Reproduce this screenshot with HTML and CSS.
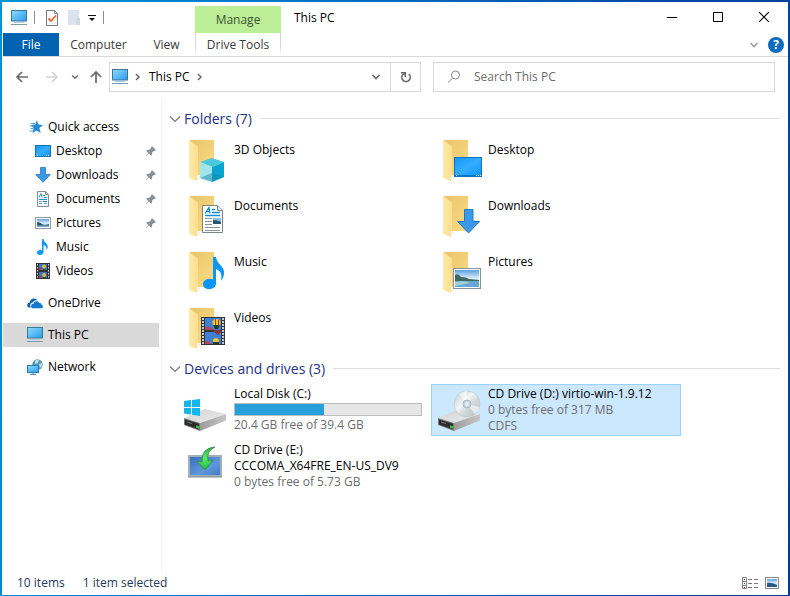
FILE: index.html
```html
<!DOCTYPE html>
<html lang="en">
<head>
<meta charset="utf-8">
<title>This PC</title>
<link rel="stylesheet" href="styles.css">
</head>
<body>
<svg class="sprite" aria-hidden="true">
  <defs>
    <linearGradient id="screen" x1="0" y1="0" x2="1" y2="1"><stop offset="0" stop-color="#8fdcff"/><stop offset="1" stop-color="#2a9bea"/></linearGradient>
    <linearGradient id="blue" x1="0" y1="0" x2="1" y2="1"><stop offset="0" stop-color="#1597f5"/><stop offset=".5" stop-color="#35adff"/><stop offset="1" stop-color="#0a93f8"/></linearGradient>
    <linearGradient id="leaf" x1="0" y1="0" x2="1" y2="0"><stop offset="0" stop-color="#ffe9a9"/><stop offset="1" stop-color="#fbdf90"/></linearGradient>
    <linearGradient id="back" x1="0" y1="0" x2="1" y2="1"><stop offset="0" stop-color="#e9c468"/><stop offset="1" stop-color="#fbdc86"/></linearGradient>
    <linearGradient id="sky" x1="0" y1="0" x2="0" y2="1"><stop offset="0" stop-color="#5ba0e0"/><stop offset=".5" stop-color="#dceefa"/><stop offset="1" stop-color="#6fa6c8"/></linearGradient>
    <linearGradient id="metal" x1="0" y1="0" x2="1" y2="1"><stop offset="0" stop-color="#d2d2d2"/><stop offset="1" stop-color="#ececec"/></linearGradient>
    <linearGradient id="side" x1="0" y1="0" x2="1" y2="0"><stop offset="0" stop-color="#9c9c9c"/><stop offset="1" stop-color="#c6c6c6"/></linearGradient>
    <linearGradient id="disc" x1="0" y1="0" x2="1" y2="1"><stop offset="0" stop-color="#bfc8ce"/><stop offset=".4" stop-color="#f1f4f5"/><stop offset=".6" stop-color="#d3dadd"/><stop offset="1" stop-color="#b6bfc4"/></linearGradient>
    <linearGradient id="green" x1="0" y1="0" x2="0" y2="1"><stop offset="0" stop-color="#3fae4c"/><stop offset=".5" stop-color="#5be86a"/><stop offset="1" stop-color="#1fb937"/></linearGradient>
    <linearGradient id="setup" x1="0" y1="0" x2="1" y2="1"><stop offset="0" stop-color="#3a6cb8"/><stop offset=".6" stop-color="#5f98dc"/><stop offset="1" stop-color="#3f74c2"/></linearGradient>
  </defs>

  <symbol id="pc" viewBox="0 0 16 16">
    <rect x=".5" y=".5" width="15" height="10.5" fill="url(#screen)" stroke="#40759a"/>
    <path d="M3 12.500h10" stroke="#a9cfe2"/><path d="M0 14.500h16" stroke="#7f9aaa"/>
  </symbol>
  <symbol id="star" viewBox="0 0 16 16">
    <path d="M10 1l1.300 4.500L16 6l-3.700 3 1.400 5-4.200-2.600L5.500 14l1.200-4.800L4 6l4.200-.4z" fill="#2388d8"/>
    <path d="M4 4.500h4M2.500 7h4M3.500 9.500h3M2.500 12h4" stroke="#4aa5e8"/>
  </symbol>
  <symbol id="desktop" viewBox="0 0 16 16">
    <rect x=".5" y="2.500" width="15" height="11" fill="url(#blue)" stroke="#1473b8"/>
    <path d="M2 12.500h1M11 12.500h1M13 12.500h1" stroke="#fff"/>
  </symbol>
  <symbol id="down" viewBox="0 0 16 16">
    <path d="M5.500 .5h5v7h4.800L8 15.300.7 7.500h4.800z" fill="#3d98e6" stroke="#2778bf" stroke-width=".8"/>
  </symbol>
  <symbol id="doc" viewBox="0 0 16 16">
    <path d="M2.500.5h8l3 3v12h-11z" fill="#fff" stroke="#858b90"/><path d="M10.500.5v3h3" fill="none" stroke="#858b90"/>
    <path d="M4 6.500l2-4 1 4M8 4.500h2M4 8.500h8M9 6.500h3" fill="none" stroke="#2294dc"/>
    <path d="M4 10.500h3M4 12.500h3M9 12.500h3" stroke="#5fa3cc"/><path d="M8 10.500h4" stroke="#2a70b0"/>
  </symbol>
  <symbol id="picture" viewBox="0 0 16 16">
    <rect x=".5" y="2.500" width="15" height="11" fill="#fff" stroke="#8c99a6"/>
    <rect x="2" y="4" width="12" height="8" fill="url(#sky)"/>
    <path d="M2 7q3 0 5 2t7 0v2H2z" fill="#2c5a6c"/><path d="M2 10.500h12V12H2z" fill="#77acd0"/>
  </symbol>
  <symbol id="music" viewBox="0 0 16 16">
    <path d="M7 0h1.500c.3 3.500 4.800 4.500 4.200 8.500-.2 1.200-.7 2-1.400 2.700.8-2.800-.5-4.300-2.800-5.200v7C8.500 15 6.800 16 5 16s-3-1-3-2.500S3.300 11 5 11c.8 0 1.500.1 2 .4z" fill="#0c98f5"/>
  </symbol>
  <symbol id="video" viewBox="0 0 16 16">
    <rect x="1" y="0" width="14" height="16" fill="#343434"/>
    <path d="M2.500 1v14M13.500 1v14" stroke="#ddd" stroke-dasharray="1.500 1.500"/>
    <path d="M4 1h8v6H4zM4 9h8v6H4z" fill="#3b72c7"/>
    <circle cx="9" cy="3.500" r="2" fill="#d9b93a"/><circle cx="9" cy="12" r="2" fill="#d9b93a"/>
    <path d="M4 5h3v2H4zM4 13h3v2H4z" fill="#8a4a62"/><path d="M8 6h3v1H8zM8 14h3v1H8z" fill="#295b36"/>
  </symbol>
  <symbol id="cloud" viewBox="0 0 16 16">
    <path d="M1.500 12.500C-.8 10.800.2 7.800 2.600 7.600 3 4 7.700 2 10.300 5.300 7.500 5 6.300 6 5.700 7.600 3.700 7.700 2.500 10 3.800 12.500z" fill="#0c62b4"/>
    <path d="M6 13.300c-2.600 0-2.700-4.300.4-4.500.5-3.300 5-3.400 5.900-.8 2-.3 2.600 1.400 2.300 2.100 2 .4 1.700 3.200-.4 3.200z" fill="#1378cf"/>
  </symbol>
  <symbol id="network" viewBox="0 0 16 16">
    <circle cx="10.500" cy="5.500" r="5.200" fill="#5695ad"/><path d="M8 2q2-2 4-1l-1 3-3 1zM12 5l3-1v3l-2 2z" fill="#b8dfe2"/>
    <rect x=".5" y="6.500" width="11" height="7" fill="url(#screen)" stroke="#287cb5"/><path d="M3 15.500h6M6 14v1" stroke="#5187a4"/>
  </symbol>
  <symbol id="pin" viewBox="0 0 12 12">
    <path d="M7 1l4 4-1 .9-.9-.2-2 2L7 9.800l-.9.9-2.200-2.200L1 11.200.7 11l2.600-3L1.200 5.800l1-.9 2.100-.1 2-2L6.100 2z" fill="#8b9196"/>
  </symbol>
  <symbol id="chevron" viewBox="0 0 10 10">
    <path d="M1.500 3L5 6.500 8.500 3" fill="none" stroke="currentColor" stroke-width="1.700"/>
  </symbol>
  <symbol id="crumb" viewBox="0 0 6 10">
    <path d="M1 2l3 3-3 3" fill="none" stroke="#6b6b6b" stroke-width="1.500"/>
  </symbol>
  <symbol id="arrow" viewBox="0 0 14 14">
    <path d="M13 7H2M7 2L2 7l5 5" fill="none" stroke="currentColor" stroke-width="1.700"/>
  </symbol>

  <symbol id="folder" viewBox="0 0 48 48">
    <path d="M6 4h25v35H13z" fill="url(#back)"/><path d="M6 4l7 5q2 1.500 2 4v26l-1 1v5L6 42z" fill="url(#leaf)"/>
    <path d="M14 39h3v3l-3 2z" fill="#f3f3f1"/>
  </symbol>
  <symbol id="drive" viewBox="0 0 48 48">
    <path d="M1 32L22 23l21 5-26 9z" fill="url(#metal)"/><path d="M17 37l26-9v6.500L17 45z" fill="url(#side)"/>
    <path d="M1 32l16 5v8L1 39z" fill="#777"/><path d="M2 33.500l14 4.300v5.800L2 38.500z" fill="#292b2a"/>
    <path d="M4 36l5 1.600" stroke="#777"/><path d="M13 39.300l3 1v2.400l-3-1z" fill="#33c834"/>
  </symbol>
</svg>

<div class="window">
  <header class="ribbon">
    <div class="quick-bar">
      <svg class="i16"><use href="#pc"/></svg>
      <span class="bar"></span>
      <button class="tool check" aria-label="Properties"><svg class="i16" viewBox="0 0 16 16"><path d="M2.500.5h8l3 3v12h-11z" fill="#fafafa" stroke="#777"/><path d="M10.500.5v3h3" fill="none" stroke="#888"/><path d="M4.500 8.500L7 11l5-5.500" fill="none" stroke="#e8642b" stroke-width="1.800"/></svg></button>
      <button class="tool" aria-label="New folder"><svg class="i16" viewBox="0 0 16 16"><path d="M2 0h11v8l1 1v6H2z" fill="#dce3ef"/><path d="M11 15V9l2-1v7" fill="none" stroke="#c6cfdf"/></svg></button>
      <button class="tool more" aria-label="Customize toolbar"><svg class="i8" viewBox="0 0 8 8"><path d="M0 1.500h8" stroke="#111"/><path d="M1 4h6L4 7z" fill="#111"/></svg></button>
      <span class="bar"></span>
    </div>
    <div class="context">Manage</div>
    <h1 class="title">This PC</h1>
    <div class="controls">
      <button aria-label="Minimize"><svg viewBox="0 0 10 10"><path d="M0 5.500h10" stroke="#000"/></svg></button>
      <button aria-label="Maximize"><svg viewBox="0 0 10 10"><path d="M.5.5h9v9h-9z" fill="none" stroke="#000"/></svg></button>
      <button aria-label="Close"><svg viewBox="0 0 10 10"><path d="M0 0l10 10M10 0L0 10" stroke="#000" stroke-width="1.200"/></svg></button>
    </div>
    <button class="tab file">File</button>
    <button class="tab">Computer</button>
    <button class="tab">View</button>
    <button class="tab drive-tab">Drive Tools</button>
    <div class="help-area">
      <button class="expand" aria-label="Expand ribbon"><svg class="i10"><use href="#chevron"/></svg></button>
      <button class="help" aria-label="Help">?</button>
    </div>
  </header>

  <div class="navigation">
    <div class="arrows">
      <button aria-label="Back"><svg class="i14"><use href="#arrow"/></svg></button>
      <button class="disabled forward" aria-label="Forward"><svg class="i14"><use href="#arrow"/></svg></button>
      <button class="recent" aria-label="Recent locations"><svg class="i8"><use href="#chevron"/></svg></button>
      <button class="up" aria-label="Up"><svg class="i14"><use href="#arrow"/></svg></button>
    </div>
    <div class="fields">
      <div class="address">
        <svg class="i16"><use href="#pc"/></svg>
        <svg class="crumb"><use href="#crumb"/></svg>
        <a href="#pc-root">This PC</a>
        <svg class="crumb"><use href="#crumb"/></svg>
        <button class="history" aria-label="Previous locations"><svg class="i10"><use href="#chevron"/></svg></button>
        <button class="refresh" aria-label="Refresh"><svg class="i12" viewBox="0 0 12 12"><path d="M8.800 3.200A4.200 4.200 0 1 1 2.400 4.200L5 2" fill="none" stroke="#666" stroke-width="1.600"/><path d="M1 1.700H5.300V6" fill="none" stroke="#666" stroke-width="1.500"/></svg></button>
      </div>
      <label class="search">
        <svg class="i14" viewBox="0 0 14 14"><circle cx="8.500" cy="5" r="4" fill="none" stroke="#858585"/><path d="M5.700 8L1 12.500" stroke="#858585"/></svg>
        <input type="search" placeholder="Search This PC" aria-label="Search This PC">
      </label>
    </div>
  </div>

  <div class="main">
    <nav class="sidebar">
      <a class="item" href="#quick"><svg class="i16"><use href="#star"/></svg>Quick access</a>
      <a class="item sub" href="#desktop-folder"><svg class="i16"><use href="#desktop"/></svg>Desktop<svg class="pin"><use href="#pin"/></svg></a>
      <a class="item sub" href="#downloads"><svg class="i16"><use href="#down"/></svg>Downloads<svg class="pin"><use href="#pin"/></svg></a>
      <a class="item sub" href="#documents"><svg class="i16"><use href="#doc"/></svg>Documents<svg class="pin"><use href="#pin"/></svg></a>
      <a class="item sub" href="#pictures"><svg class="i16"><use href="#picture"/></svg>Pictures<svg class="pin"><use href="#pin"/></svg></a>
      <a class="item sub" href="#music-folder"><svg class="i16"><use href="#music"/></svg>Music</a>
      <a class="item sub" href="#videos"><svg class="i16"><use href="#video"/></svg>Videos</a>
      <a class="item root" href="#onedrive"><svg class="i16"><use href="#cloud"/></svg>OneDrive</a>
      <a class="item root current" href="#pc-root"><svg class="i16"><use href="#pc"/></svg>This PC</a>
      <a class="item root" href="#net"><svg class="i16"><use href="#network"/></svg>Network</a>
    </nav>

    <main class="content">
      <section>
        <h2 class="group"><svg class="fold" viewBox="0 0 12 12"><path d="M1 3.500l5 5 5-5" fill="none" stroke="#777" stroke-width="1.200"/></svg>Folders (7)</h2>
        <div class="tiles folders">
          <a class="tile" href="#objects"><svg class="i48" viewBox="0 0 48 48"><use href="#folder"/><path d="M29 22l12 4-12 5-12-5z" fill="#4cc8de"/><path d="M17 26l12 5v15l-12-4z" fill="#a1e5ed"/><path d="M29 31l12-5v15l-12 5z" fill="#0ba3cf"/><path d="M17 42l12-5 12 4-12 5z" fill="#168eaa" opacity=".5"/></svg><span>3D Objects</span></a>
          <a class="tile" href="#desktop-folder"><svg class="i48" viewBox="0 0 48 48"><use href="#folder"/><rect x="17.500" y="21.500" width="27" height="19" fill="url(#blue)" stroke="#1274bd"/><path d="M18 39.500h26" stroke="#0875c7"/><path d="M19 39.500h1M39 39.500h1M41 39.500h1M43 39.500h1" stroke="#fff"/></svg><span>Desktop</span></a>
          <a class="tile" href="#documents"><svg class="i48" viewBox="0 0 48 48"><use href="#folder"/><path d="M19.500 13.500h15l5 5v22h-20z" fill="#fff" stroke="#7d8387"/><path d="M34.500 13.500v5h5" fill="#e8edf0" stroke="#7d8387"/><path d="M22 21.500l4-6 1 6M23.500 19.500h3M29 17.500h3M29 20.500h8M22 23.500h15" fill="none" stroke="#168bd2" stroke-width="1.300"/><path d="M22 26.500h7M22 29.500h7M22 32.500h7M22 35.500h15M22 38.500h15" stroke="#8e9599"/><path d="M30 26h8v6h-8z" fill="#8fbbe2"/><path d="M30 28q4 0 8 2v2h-8z" fill="#245574"/></svg><span>Documents</span></a>
          <a class="tile" href="#downloads"><svg class="i48" viewBox="0 0 48 48"><use href="#folder"/><path d="M27.500 17.500h8.500v12h6.500L31.500 41 20.500 29.500h7z" fill="#3c99e8" stroke="#2379c0"/></svg><span>Downloads</span></a>
          <a class="tile" href="#music-folder"><svg class="i48" viewBox="0 0 48 48"><use href="#folder"/><path d="M30 9h3c1 8 9 9 8 17-.3 3-1.500 5-3 7 1.500-7-.5-10-5-12v14c0 4-3 6-7 6s-6-2-6-5 3-5 6-5c2 0 3 0 4 .5z" fill="#0996f4"/></svg><span>Music</span></a>
          <a class="tile" href="#pictures"><svg class="i48" viewBox="0 0 48 48"><use href="#folder"/><rect x="16.500" y="20.500" width="27" height="20" fill="#fff" stroke="#87929c"/><rect x="18" y="22" width="24" height="17" fill="url(#sky)"/><path d="M18 27q3-2 6 2 5 0 8 2l10 1v1H18z" fill="#3d6a5c"/><path d="M18 33h24v6H18z" fill="#6aa8d2"/><path d="M18 34q10-2 15 1l-15 3z" fill="#a5cdd6"/></svg><span>Pictures</span></a>
          <a class="tile" href="#videos"><svg class="i48" viewBox="0 0 48 48"><use href="#folder"/><path d="M18 13h24v28H18z" fill="#343434"/><path d="M20 14v27M40 14v27" stroke="#ccc" stroke-width="2" stroke-dasharray="2 1"/><path d="M22 14h16v12H22zM22 28h16v12H22z" fill="#3f7fd6"/><path d="M22 23q4-1 7 1l3 2H22zM22 37q4-1 7 3h-7z" fill="#b04a60"/><circle cx="33.500" cy="19" r="4" fill="#e9c52e"/><path d="M32 15h1v8h-1zM35 16h1v6h-1z" fill="#a2402e"/><path d="M30 21h7l-2 4h-3z" fill="#293b25"/><path d="M31 26h7v2l-3 3-4-3z" fill="#8a3340"/><circle cx="33" cy="37" r="3" fill="#e9c52e"/><path d="M30 38h6v2h-6z" fill="#293b25"/></svg><span>Videos</span></a>
        </div>
      </section>
      <section>
        <h2 class="group"><svg class="fold" viewBox="0 0 12 12"><path d="M1 3.500l5 5 5-5" fill="none" stroke="#777" stroke-width="1.200"/></svg>Devices and drives (3)</h2>
        <div class="tiles">
          <a class="tile" href="#c"><svg class="i48" viewBox="0 0 48 48"><use href="#drive"/><path d="M1 15l7-1v7H1zM9 14l8-1v8H9zM1 22h7v6.500l-7-1zM9 22h8v8l-8-1.300z" fill="#13b5ec"/></svg><span class="info"><span>Local Disk (C:)</span><progress max="100" value="48" aria-label="Space used"></progress><small>20.4 GB free of 39.4 GB</small></span></a>
          <a class="tile selected" href="#d"><svg class="i48" viewBox="0 0 48 48"><use href="#drive"/><circle cx="30" cy="18" r="13" fill="url(#disc)" stroke="#bcc5ca" stroke-width=".6"/><path d="M30 18L22 8q4-3 8-3zM30 18l8 10q4-3 5-7z" fill="#fff" opacity=".55"/><circle cx="30" cy="18" r="4" fill="#c9d5dc" stroke="#aeb9c0"/><circle cx="30" cy="18" r="2" fill="#e4f1fb"/></svg><span class="info"><span>CD Drive (D:) virtio-win-1.9.12</span><small>0 bytes free of 317 MB</small><small>CDFS</small></span></a>
          <a class="tile" href="#e"><svg class="i48" viewBox="0 0 48 48"><rect x="6" y="14" width="32" height="20" fill="url(#setup)" stroke="#a3afb8" stroke-width="2"/><path d="M5 35h34" stroke="#7f8b96"/><path d="M32 5q-9 4-7 14l5-1-8 10-8-9 5 1Q18 6 32 5z" fill="url(#green)" stroke="#23913a" stroke-width=".8"/></svg><span class="info"><span>CD Drive (E:)</span><span>CCCOMA_X64FRE_EN-US_DV9</span><small>0 bytes free of 5.73 GB</small></span></a>
        </div>
      </section>
    </main>
  </div>

  <footer class="status">
    <span>10 items</span>
    <span>1 item selected</span>
    <div class="views">
      <button aria-label="Details view"><svg class="i16" viewBox="0 0 16 16"><path d="M.5 2.500h4v11h-4zM.5 6.500h4M.5 10.500h4" fill="none" stroke="#858585"/><path d="M2 4.500h1M2 8.500h1" stroke="#446"/><path d="M2 12.500h1" stroke="#d22"/><path d="M6 4.500h4M12 4.500h4M6 8.500h4M12 8.500h4M6 12.500h4M12 12.500h4" stroke="#777"/></svg></button>
      <button aria-label="Large icons view"><svg class="i16" viewBox="0 0 16 16"><path d="M1.500 2.500h13v11h-13z" fill="#fff" stroke="#858585"/><path d="M3 4h10v8H3z" fill="url(#sky)"/><path d="M3 8q4-1 10 2v2H3z" fill="#245b87"/></svg></button>
    </div>
  </footer>
</div>
</body>
</html>
```
FILE: styles.css
```css
* { box-sizing: border-box; }
body {
  margin: 0;
  min-height: 100vh;
  display: flex;
  padding: 2px 2px 1px;
  background: linear-gradient(100deg, #0094d8 0%, #0078cc 30%, #0048a8 75%, #003f94 100%);
  font: 12px/16px "Open Sans", "Noto Sans", sans-serif;
  color: #000;
}
button {
  border: 0;
  padding: 0;
  background: none;
  font: inherit;
  color: inherit;
  display: flex;
  align-items: center;
  justify-content: center;
}
a { color: inherit; text-decoration: none; }
svg { display: block; flex: none; }
.sprite { position: absolute; width: 0; height: 0; }
.i8 { width: 8px; height: 8px; }
.i10 { width: 10px; height: 10px; }
.i12 { width: 12px; height: 12px; }
.i14 { width: 14px; height: 14px; }
.i16 { width: 16px; height: 16px; }
.i48 { width: 48px; height: 48px; }

.window {
  flex: 1;
  display: flex;
  flex-direction: column;
  background: #fff;
  padding-left: 1px;
}

/* Title bar and ribbon tabs share one set of columns */
.ribbon {
  display: grid;
  grid-template-columns: 56px 79px 57px 86px 1fr auto;
  grid-template-rows: 31px 23px;
  border-bottom: 1px solid #d9d9d9;
}
.quick-bar { grid-column: 1 / 4; display: flex; align-items: center; padding-left: 8px; }
.bar { width: 1px; height: 13px; background: #8c8c8c; margin-left: 7px; }
.tool { margin-left: 6px; }
.tool.check { margin-left: 9px; }
.context {
  margin-top: 4px;
  background: #bcee98;
  color: #3d5433;
  display: flex;
  align-items: center;
  justify-content: center;
}
.title { margin: 0; padding: 8px 0 0 13px; font-size: 12px; line-height: 16px; font-weight: 400; }
.controls { display: flex; padding-right: 1px; }
.controls button { width: 46px; height: 30px; }
.controls svg { width: 10px; height: 10px; }
.tab { color: #3a3a3a; }
.file { background: #0063b1; color: #fff; }
.drive-tab {
  border: solid;
  border-width: 0 1px;
  border-image: linear-gradient(#d0d0d0, #d8d8d8 60%, #fff 90%) 1;
}
.help-area { grid-column: 5 / 7; display: flex; justify-content: flex-end; align-items: center; gap: 9px; padding-right: 4px; }
.expand { color: #a0a0a0; }
.help { width: 16px; height: 16px; border-radius: 50%; background: #0d6cbd; color: #fff; font-weight: 700; }

.navigation { display: flex; padding: 5px 13px 0 12px; }
.arrows { display: flex; align-items: center; width: 94px; color: #696969; }
.forward { margin-left: 16px; transform: scaleX(-1); }
.disabled { color: #d4d4d4; }
.recent { margin-left: 12px; }
.up { margin-left: 10px; transform: rotate(90deg); }
.fields { flex: 1; display: grid; grid-template-columns: 312fr 342fr; gap: 12px; }
.address { display: flex; align-items: center; height: 30px; border: 1px solid #d9d9d9; padding-left: 2px; }
.crumb { width: 6px; height: 10px; margin: 0 8px 0 7px; }
.history { margin-left: auto; width: 28px; height: 28px; color: #6b6b6b; }
.refresh { width: 30px; height: 28px; border-left: 1px solid #d9d9d9; }
.search { display: flex; align-items: center; height: 30px; border: 1px solid #d9d9d9; padding-left: 13px; gap: 13px; }
.search input { flex: 1; min-width: 0; border: 0; padding: 0; outline: 0; font: inherit; background: none; appearance: none; }
.search input::placeholder { color: #6d6d6d; opacity: 1; }

.main { flex: 1; display: flex; margin-top: 8px; }
.sidebar { width: 159px; padding: 15px 2px 0 0; border-right: 1px solid #f0f0f0; }
.item { display: flex; align-items: center; gap: 5px; height: 24px; padding: 0 2px 0 24px; }
.sub { padding-left: 32px; }
.root { margin-top: 8px; }
.current { background: #d9d9d9; }
.pin { width: 12px; height: 12px; margin-left: auto; }

.content { flex: 1; padding: 7px 8px 0 7px; }
.group {
  display: flex;
  align-items: center;
  height: 23px;
  margin: 0 0 4px;
  font-size: 14px;
  font-weight: 400;
  color: #1e3287;
}
.group::after { content: ""; flex: 1; height: 1px; margin-left: 8px; background: #dedede; }
.fold { width: 12px; height: 12px; margin-right: 3px; }
.tiles { display: grid; grid-template-columns: repeat(auto-fill, 250px); gap: 4px; padding-left: 8px; margin-bottom: 3px; }
.tile { display: flex; height: 52px; gap: 3px; padding: 1px 8px 1px 5px; border: 1px solid transparent; white-space: nowrap; }
.folders .tile > span { padding-top: 6px; }
.selected { background: #cce8ff; border-color: #99d1ff; }
.info { display: flex; flex-direction: column; }
.info small { font-size: 12px; color: #6d6d6d; }
progress {
  appearance: none;
  width: 188px;
  height: 13px;
  margin: 1px 0;
  border: 1px solid #bcbcbc;
  background: #e6e6e6;
}
progress::-webkit-progress-bar { background: #e6e6e6; }
progress::-webkit-progress-value { background: #26a0da; }

.status { display: flex; align-items: center; height: 24px; padding: 0 8px 0 14px; gap: 18px; color: #1e395b; }
.views { margin-left: auto; display: flex; gap: 6px; }
```
